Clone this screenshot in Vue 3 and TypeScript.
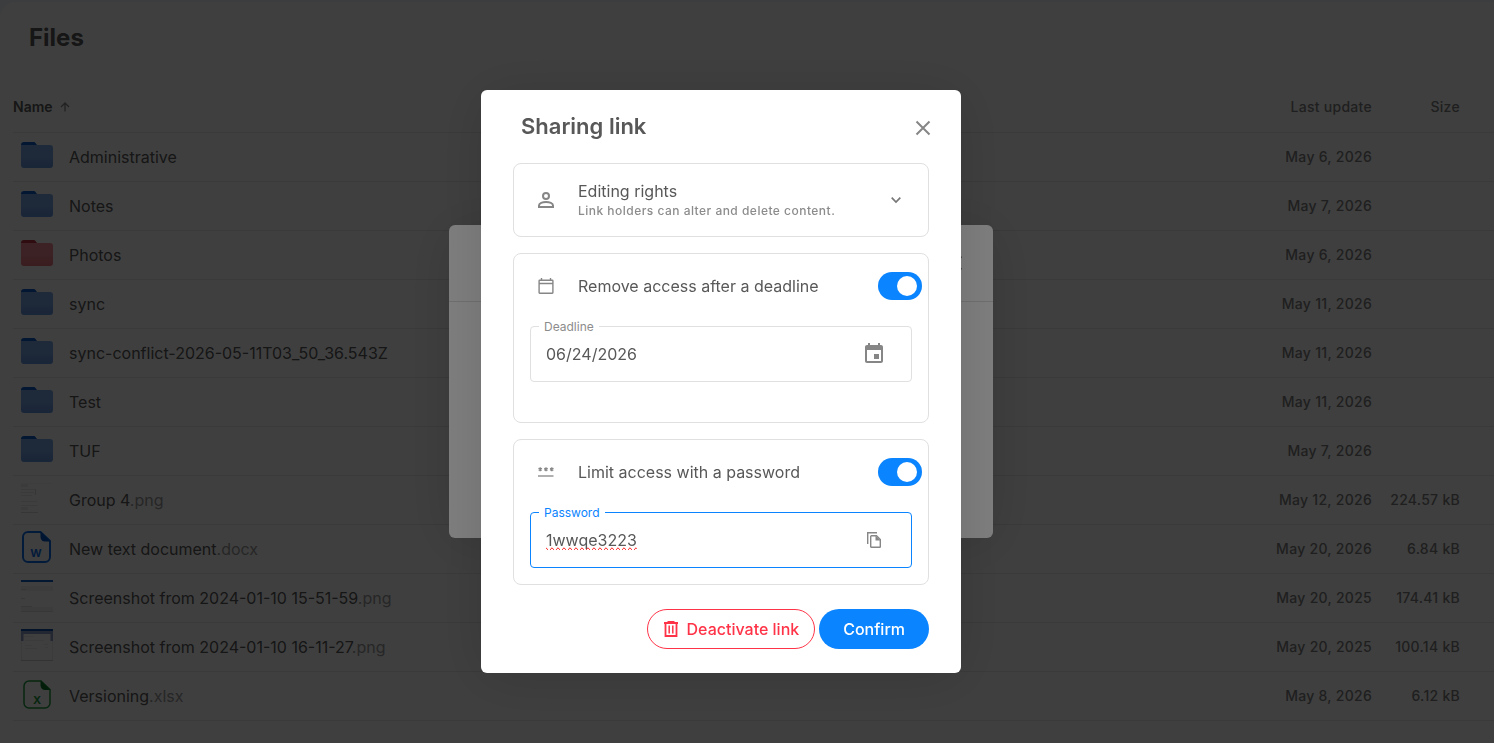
<script setup lang="ts">
import { ref } from 'vue'

interface Entry {
  name: string
  ext?: string
  kind: 'folder' | 'folder-red' | 'doc' | 'sheet' | 'thumb-a' | 'thumb-b' | 'thumb-c'
  updated: string
  size?: string
}

const entries: Entry[] = [
  { name: 'Administrative', kind: 'folder', updated: 'May 6, 2026' },
  { name: 'Notes', kind: 'folder', updated: 'May 7, 2026' },
  { name: 'Photos', kind: 'folder-red', updated: 'May 6, 2026' },
  { name: 'sync', kind: 'folder', updated: 'May 11, 2026' },
  { name: 'sync-conflict-2026-05-11T03_50_36.543Z', kind: 'folder', updated: 'May 11, 2026' },
  { name: 'Test', kind: 'folder', updated: 'May 11, 2026' },
  { name: 'TUF', kind: 'folder', updated: 'May 7, 2026' },
  { name: 'Group 4', ext: '.png', kind: 'thumb-a', updated: 'May 12, 2026', size: '224.57 kB' },
  { name: 'New text document', ext: '.docx', kind: 'doc', updated: 'May 20, 2026', size: '6.84 kB' },
  { name: 'Screenshot from 2024-01-10 15-51-59', ext: '.png', kind: 'thumb-b', updated: 'May 20, 2025', size: '174.41 kB' },
  { name: 'Screenshot from 2024-01-10 16-11-27', ext: '.png', kind: 'thumb-c', updated: 'May 20, 2025', size: '100.14 kB' },
  { name: 'Versioning', ext: '.xlsx', kind: 'sheet', updated: 'May 8, 2026', size: '6.12 kB' }
]

const deadlineOn = ref(true)
const passwordOn = ref(true)
const deadline = ref('06/24/2026')
const password = ref('1wwqe3223')
</script>

<template>
  <div class="app">
    <main class="page">
      <h1 class="page-title">Files</h1>
      <table class="files">
        <thead>
          <tr>
            <th class="col-name">
              Name
              <svg class="sort" width="10" height="10" viewBox="0 0 10 10" aria-hidden="true">
                <path d="M5 9.5V1M1 5l4-4 4 4" fill="none" stroke="currentColor" stroke-width="1.3" />
              </svg>
            </th>
            <th class="col-date">Last update</th>
            <th class="col-size">Size</th>
          </tr>
        </thead>
        <tbody>
          <tr v-for="e in entries" :key="e.name">
            <td class="col-name">
              <div class="file">
                <span class="file-icon">
                  <svg v-if="e.kind === 'folder' || e.kind === 'folder-red'" :class="e.kind" width="32" height="32" viewBox="0 0 32 32">
                    <defs>
                      <linearGradient :id="'front-' + e.name" x1="0" y1="0" x2="0" y2="1">
                        <stop class="g-top" offset="0.5" />
                        <stop class="g-bottom" offset="1" />
                      </linearGradient>
                    </defs>
                    <path class="back" d="M3 3h9.500c1 0 1.500.3 2 1l1.500 2V12H0V6a3 3 0 0 1 3-3z" />
                    <path :fill="`url(#front-${e.name})`" d="M0 6h29a3 3 0 0 1 3 3v17a3 3 0 0 1-3 3H3a3 3 0 0 1-3-3z" />
                  </svg>
                  <svg v-else-if="e.kind === 'doc'" width="32" height="32" viewBox="0 0 32 32">
                    <path d="M7 1h12.500L29 10v16a5 5 0 0 1-5 5H7a5 5 0 0 1-5-5V6a5 5 0 0 1 5-5z" fill="none" stroke="#0d6ee8" stroke-width="2" />
                    <path d="M19.500 0.500 29.500 10.500H24a4.500 4.500 0 0 1-4.500-4.500z" fill="#0055c4" />
                    <text class="letter" x="15" y="26" fill="#0d6ee8">W</text>
                  </svg>
                  <svg v-else-if="e.kind === 'sheet'" width="32" height="32" viewBox="0 0 32 32">
                    <path d="M8 3h12l9 8.500V25a5 5 0 0 1-5 5H8a5 5 0 0 1-5-5V8a5 5 0 0 1 5-5z" fill="none" stroke="#1f9a3c" stroke-width="1.500" />
                    <path d="M19.500 2.500 29.500 12H24a4.500 4.500 0 0 1-4.500-4.500z" fill="#0a7a28" />
                    <text class="letter" x="16" y="26" fill="#1f9a3c">X</text>
                  </svg>
                  <svg v-else-if="e.kind === 'thumb-a'" width="32" height="32" viewBox="0 0 32 32">
                    <path d="M0 2h7v3H0zM0 25h7v3H0z" fill="#eceff1" />
                    <path d="M0 1.500h32" stroke="#f4f4f4" />
                    <path d="M0 7.500h15M0 10.500h13M0 13.500h11M0 19.500h16M0 23.500h17" stroke="#e8e8e8" />
                    <path d="M14.500 7v6M0 30.500h17" stroke="#d8d8d8" />
                  </svg>
                  <svg v-else-if="e.kind === 'thumb-b'" width="32" height="32" viewBox="0 0 32 32">
                    <path d="M0 1h32" stroke="#0d5fc4" stroke-width="2" />
                    <path d="M0 6h32v5H0zM0 27h32v4H0z" fill="#f4f0f0" />
                    <path d="M0 9.500h5M0 18.500h4M0 26.500h11M0 31.500h32" stroke="#dcdcdc" />
                  </svg>
                  <svg v-else width="32" height="32" viewBox="0 0 32 32">
                    <path d="M0 2h32v10H0z" fill="#8a9fc9" />
                    <path d="M0 1h32" stroke="#0d4fa4" stroke-width="2" />
                    <path d="M2.500 5h27v26h-27z" fill="#fff" />
                    <path d="M3 7.500h10M4 11.500h19M4 16.500h7M23 15.500h4M4 19.500h12M24 18.500h3" stroke="#ececec" />
                    <path d="M.500 12v20M31.500 12v20" stroke="#eee" />
                    <path d="M0 31.500h32" stroke="#cfcfcf" />
                  </svg>
                </span>
                <span>{{ e.name }}<span class="ext">{{ e.ext }}</span></span>
              </div>
            </td>
            <td class="col-date">{{ e.updated }}</td>
            <td class="col-size">{{ e.size }}</td>
          </tr>
        </tbody>
      </table>
    </main>

    <div class="overlay">
      <section class="sheet" aria-label="Share">
        <header class="sheet-head">
          <button class="icon-btn" type="button" aria-label="Close panel">
            <svg width="16" height="16" viewBox="0 0 16 16"><path d="M1.500 1.500l13 13M14.500 1.500l-13 13" fill="none" stroke="currentColor" stroke-width="2" /></svg>
          </button>
        </header>
      </section>
    </div>

    <div class="overlay">
      <section class="dialog" role="dialog" aria-labelledby="dlg-title">
        <header class="dialog-head">
          <h2 id="dlg-title">Sharing link</h2>
          <button class="icon-btn" type="button" aria-label="Close">
            <svg width="16" height="16" viewBox="0 0 16 16"><path d="M1.500 1.500l13 13M14.500 1.500l-13 13" fill="none" stroke="currentColor" stroke-width="2" /></svg>
          </button>
        </header>

        <div class="cards">
          <button class="card rights" type="button">
            <svg class="lead" width="16" height="16" viewBox="0 0 16 16">
              <circle cx="8" cy="4" r="3" fill="none" stroke="currentColor" stroke-width="2" />
              <path d="M1 15v-1.500C1 11.300 4.500 10 8 10s7 1.300 7 3.500V15z" fill="none" stroke="currentColor" stroke-width="2" />
            </svg>
            <span class="rights-text">
              <span class="row-title">Editing rights</span>
              <span class="hint">Link holders can alter and delete content.</span>
            </span>
            <svg class="chevron" width="16" height="16" viewBox="0 0 16 16">
              <path d="M3.700 5.700 8 10l4.300-4.300" fill="none" stroke="currentColor" stroke-width="1.700" />
            </svg>
          </button>

          <div class="card deadline">
            <div class="row">
              <svg class="lead" width="16" height="16" viewBox="0 0 16 16">
                <path d="M1.700 2.200h12.600a.6.6 0 0 1 .6.6v11.800a.6.6 0 0 1-.6.6H1.700a.6.6 0 0 1-.6-.6V2.800a.6.6 0 0 1 .6-.6zM1 5.500h14M3.500 0v2.500M12.500 0v2.500" fill="none" stroke="currentColor" stroke-width="1.400" />
              </svg>
              <label class="row-title" for="sw-deadline">Remove access after a deadline</label>
              <input id="sw-deadline" v-model="deadlineOn" class="switch" type="checkbox" role="switch" />
            </div>
            <div class="field">
              <label for="deadline">Deadline</label>
              <input id="deadline" v-model="deadline" type="text" />
              <button class="icon-btn" type="button" aria-label="Choose date">
                <svg width="24" height="24" viewBox="0 0 24 24">
                  <path fill="currentColor" d="M17 12h-5v5h5v-5zM16 1v2H8V1H6v2H5c-1.110 0-1.990.9-1.990 2L3 19c0 1.100.89 2 2 2h14c1.100 0 2-.9 2-2V5c0-1.100-.9-2-2-2h-1V1h-2zm3 18H5V8h14v11z" />
                </svg>
              </button>
            </div>
          </div>

          <div class="card password">
            <div class="row">
              <svg class="lead" width="16" height="16" viewBox="0 0 16 16">
                <path d="M0 12h15.500" stroke="currentColor" stroke-width="1.300" />
                <path d="M2.200 3.300v4M.5 4.300l3.400 2M3.900 4.300.5 6.300M8 3.300v4M6.300 4.300l3.400 2M9.700 4.300l-3.400 2M13.800 3.300v4M12.100 4.300l3.400 2M15.500 4.300l-3.400 2" stroke="currentColor" stroke-width="1.300" />
              </svg>
              <label class="row-title" for="sw-password">Limit access with a password</label>
              <input id="sw-password" v-model="passwordOn" class="switch" type="checkbox" role="switch" />
            </div>
            <div class="field active">
              <label for="password">Password</label>
              <input id="password" v-model="password" class="misspelt" type="text" />
              <button class="icon-btn" type="button" aria-label="Copy password">
                <svg width="16" height="16" viewBox="0 0 16 16">
                  <path d="M1.700 12V.7H11" fill="none" stroke="currentColor" stroke-width="1.400" />
                  <path d="M5 3.700h5.500l3.800 3.800v7.200a.6.6 0 0 1-.6.6H5.300a.6.6 0 0 1-.6-.6V4.300a.6.6 0 0 1 .6-.6z" fill="none" stroke="currentColor" stroke-width="1.400" />
                  <path d="M9.500 3.500v5h5z" fill="currentColor" />
                </svg>
              </button>
            </div>
          </div>
        </div>

        <footer class="actions">
          <button class="btn danger" type="button">
            <svg width="16" height="16" viewBox="0 0 16 16">
              <path d="M1 2h14M4.500 1h7" fill="none" stroke="currentColor" stroke-width="1.800" />
              <path d="M2.500 2v13h11V2" fill="none" stroke="currentColor" stroke-width="1.800" />
              <path d="M6.200 4.500v8M9.800 4.500v8" fill="none" stroke="currentColor" stroke-width="1.500" />
            </svg>
            Deactivate link
          </button>
          <button class="btn primary" type="button">Confirm</button>
        </footer>
      </section>
    </div>
  </div>
</template>

<style>
body {
  background: #f3f6f9;
}
</style>

<style scoped>
* {
  box-sizing: border-box;
}
.app {
  height: 100vh;
  overflow: hidden;
  font-family: Inter, "Open Sans", sans-serif;
  color: #585858;
}
button,
input {
  font: inherit;
  color: inherit;
}
button {
  cursor: pointer;
}
.page {
  height: 100%;
  margin-top: 2px;
  padding: 20px 0 0 13px;
  background: #fff;
  border-radius: 16px 0 0 0;
}
.page-title {
  margin: 0 0 27px 16px;
  font-size: 24px;
  line-height: 32px;
  font-weight: 700;
}
.files {
  width: 100%;
  border-collapse: collapse;
  font-size: 16px;
}
.files th,
.files td {
  height: 49px;
  padding: 0;
  border-bottom: 1px solid #e8e8e8;
  font-weight: 400;
  text-align: left;
}
.files th {
  height: 51px;
  font-size: 14px;
  font-weight: 600;
}
.files th.col-date,
.files th.col-size,
.files td.col-date,
.files td.col-size {
  width: 120px;
  font-size: 14px;
  font-weight: 500;
  text-align: right;
  color: #7c7c7c;
  letter-spacing: 0.02em;
}
.files th.col-size,
.files td.col-size {
  width: 122px;
  padding-right: 34px;
}
.sort {
  margin-left: 4px;
  color: #8a8a8a;
}
.file {
  display: flex;
  align-items: center;
  gap: 16px;
  padding-left: 8px;
}
.file-icon {
  width: 32px;
  height: 36px;
}
.file-icon svg {
  display: block;
}
.letter {
  font-size: 11px;
  font-weight: 700;
  text-anchor: middle;
}
.ext {
  color: #9a9a9a;
}
.folder .back {
  fill: #0f5fc8;
}
.folder .g-top {
  stop-color: #7aa8e6;
}
.folder .g-bottom {
  stop-color: #6496e2;
}
.folder-red .back {
  fill: #b83240;
}
.folder-red .g-top {
  stop-color: #f08a93;
}
.folder-red .g-bottom {
  stop-color: #e8707b;
}

.overlay {
  position: fixed;
  inset: 0;
  display: flex;
  align-items: center;
  justify-content: center;
  padding: 20px 52px 0 0;
  background: rgba(0, 0, 0, 0.5);
}
.sheet,
.dialog {
  background: #fff;
  border-radius: 6px;
  box-shadow: 0 4px 56px rgba(0, 0, 0, 0.14);
}
.sheet {
  width: 544px;
  min-height: 313px;
}
.sheet-head {
  display: flex;
  align-items: center;
  justify-content: flex-end;
  height: 77px;
  padding-right: 30px;
  border-bottom: 1px solid #e0e0e0;
}
.dialog {
  width: 480px;
  padding: 24px 32px;
}
.icon-btn {
  display: flex;
  padding: 0;
  border: 0;
  background: none;
  color: #868686;
}
.dialog-head {
  display: flex;
  align-items: center;
  justify-content: space-between;
  height: 28px;
  margin: 0 -2px 21px 8px;
}
.dialog-head h2 {
  align-self: flex-start;
  margin: 0;
  font-size: 22px;
  line-height: 24px;
  font-weight: 600;
}
.cards {
  display: flex;
  flex-direction: column;
  gap: 16px;
}
.card {
  border: 1px solid #e0e0e0;
  border-radius: 8px;
  background: #fff;
}
.lead {
  flex: none;
  margin-right: 24px;
  color: #868686;
}
.rights {
  display: flex;
  align-items: center;
  padding: 16px 24px;
  text-align: left;
}
.rights-text {
  display: flex;
  flex: 1;
  flex-direction: column;
}
.row-title {
  font-size: 16px;
  line-height: 22px;
}
.hint {
  font-size: 12px;
  line-height: 18px;
  font-weight: 500;
  letter-spacing: 0.04em;
  color: #8c8c8c;
}
.chevron {
  color: #777;
}
.deadline {
  padding: 0 16px 40px;
}
.password {
  padding: 0 16px 16px;
}
.row {
  display: flex;
  align-items: center;
  height: 64px;
  margin: 0 -10px 8px 8px;
}
.row label {
  flex: 1;
}
.switch {
  display: flex;
  align-items: center;
  appearance: none;
  width: 44px;
  height: 28px;
  margin: 0;
  padding: 4px;
  border-radius: 14px;
  background: #c4c4c4;
}
.switch::before {
  content: "";
  width: 20px;
  height: 20px;
  border-radius: 50%;
  background: #fff;
}
.switch:checked {
  justify-content: flex-end;
  padding-right: 5px;
  background: #0b84ff;
}
.field {
  position: relative;
  display: flex;
  align-items: center;
  justify-content: space-between;
  height: 56px;
  padding: 0 25px 0 15px;
  border: 1px solid #e0e0e0;
  border-radius: 4px;
}
.field label {
  position: absolute;
  top: -9px;
  left: 8px;
  padding: 0 5px;
  background: #fff;
  font-size: 12px;
  line-height: 18px;
  color: #8c8c8c;
}
.field input {
  flex: 1;
  min-width: 0;
  padding: 0;
  border: 0;
  outline: 0;
  background: none;
  font-size: 16px;
}
.field.active {
  padding-right: 29px;
  border-color: #0b84ff;
}
.field.active label {
  color: #0b84ff;
}
.misspelt {
  text-decoration-line: spelling-error;
}
.actions {
  display: flex;
  justify-content: flex-end;
  gap: 4px;
  margin-top: 24px;
}
.btn {
  display: flex;
  align-items: center;
  gap: 8px;
  height: 40px;
  padding: 0 24px;
  border: 0;
  border-radius: 20px;
  font-size: 16px;
  font-weight: 500;
}
.primary {
  background: #0b84ff;
  color: #fff;
}
.danger {
  padding: 0 15px;
  border: 1px solid #ff3347;
  background: #fff;
  color: #ff3347;
}
</style>
